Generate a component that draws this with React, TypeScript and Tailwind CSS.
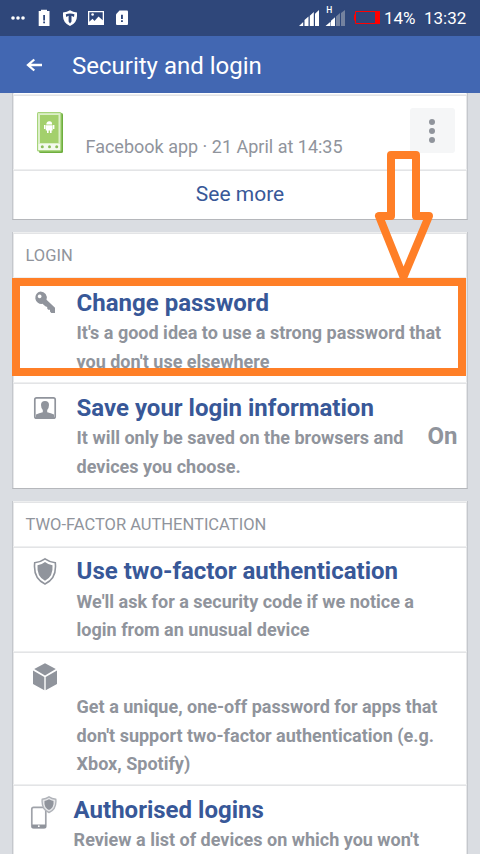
import type { ReactNode } from "react";

function Divider() {
  return (
    <div className="h-[2px] shrink-0 border-b border-[#e3e4e6] bg-[#eeeff0]" />
  );
}

function StatusBar() {
  return (
    <div className="flex h-[36px] shrink-0 items-center bg-[#2f477a] text-white">
      <svg width="240" height="36" viewBox="0 0 240 36" fill="#fff">
        <circle cx="13" cy="18" r="1.8" />
        <circle cx="18" cy="18" r="1.8" />
        <circle cx="23" cy="18" r="1.8" />
        <path d="M41 11V9.700h6V11h2.500v15H38.700V11z" />
        <path d="M43.200 15h1.800v5.500h-1.800zM43.200 21.500h1.800v1.800h-1.800z" fill="#2f477a" />
        <path d="M63 12.500Q67 12 70 10.300 73 12 77 12.500V16Q77 23 70 26 63 23 63 16z" />
        <path d="M65.800 14.300Q70 12.800 74.400 14.300L74 17 71.500 15.700V21.500L70 23.500 68.600 21.500V15.700L66.200 17z" fill="#2f477a" />
        <path d="M88 11h16v14H88z" />
        <path d="M89.300 12.300h13.400v8L98.500 16.500 94.500 21 92.500 18.800 89.300 21.800z" fill="#2f477a" />
        <circle cx="92.600" cy="14.500" r="1.300" />
        <path d="M119.500 10.500H127q1 0 1 1V24q0 1-1 1H117q-1 0-1-1V14.300z" />
        <path d="M121 14.800h1.900v4.200H121zM121 20.200h1.900v1.800H121z" fill="#2f477a" />
      </svg>
      <svg width="142" height="36" viewBox="240 0 142 36" fill="#fff">
        <path d="M299 26l4.200-4v4zM304.500 26v-6l4-3.500V26zM309.800 26V15.800l4-3.800v14zM315 26V13.800l4-3.800v16z" />
        <path d="M325.500 26l5-4.200V26zM331 26v-5.300l4-3.500V26z" />
        <path d="M336 26V16.500l4-3.500v13zM341 26V13l4-3v16z" fill="#74829f" />
        <text x="326.300" y="13" fontSize="8.500" fontWeight="500" className="font-['Roboto',sans-serif]">H</text>
        <path d="M355.500 11.500h20v12h-20z" fill="none" stroke="#f00" />
        <path d="M375 11h5v13h-5zM354 14.500h1.500v6H354z" fill="#f00" />
      </svg>
      <span className="ml-[2px] w-[40px] whitespace-nowrap text-[17px] leading-[36px]">14%</span>
      <span className="whitespace-nowrap text-[17px] leading-[36px]">13:32</span>
    </div>
  );
}

function Header() {
  return (
    <div className="flex h-[57px] shrink-0 items-center bg-[#4267b2] text-white">
      <svg className="ml-[25px]" width="19" height="16" viewBox="0 0 19 16" fill="none" stroke="#fff" strokeWidth="2.300">
        <path d="M17 8H3M9.300 2.500L3 8l6.300 5.500" />
      </svg>
      <h1 className="ml-[28px] mt-[3px] whitespace-nowrap text-[24px] leading-[32px]">Security and login</h1>
    </div>
  );
}

function DeviceIcon() {
  return (
    <svg width="28" height="42" viewBox="0 0 28 42">
      <rect x="2" y="1" width="24" height="40" rx="1.500" fill="#6faf3f" />
      <rect x="0" y="0" width="24.500" height="39.500" rx="1.500" fill="#a6d47a" />
      <rect x="1" y="1.200" width="22.300" height="37" fill="#dcefc8" />
      <rect x="3" y="3" width="18.500" height="28" fill="#a3d06c" />
      <path d="M9.300 12.500q0-3 2.900-3.300t2.900 3.300z" fill="#fff" />
      <path d="M8.800 13.200h6.800v5.300H8.800zM7 13h1.400v4H7zM16 13h1.400v4H16zM10 18.500h1.600v2.500H10zM13 18.500h1.600v2.500H13z" fill="#fff" />
      <rect x="1.500" y="32" width="21.500" height="6" fill="#f4faee" />
      <circle cx="5.300" cy="34.800" r="1.500" fill="#8bbd5a" />
      <circle cx="12.500" cy="34.800" r="1.500" fill="#8bbd5a" />
      <circle cx="19.700" cy="34.800" r="1.500" fill="#8bbd5a" />
    </svg>
  );
}

function KeyIcon() {
  return (
    <svg width="24" height="24" viewBox="0 0 24 24" fill="#90949c">
      <path fillRule="evenodd" d="M7.500 .5A6.300 6.300 0 0 1 13.500 8.800L22 16.800V22H18.300L17 20.500V18.700H15.200L14.200 17.500V16L12.300 15.300 9.500 12.800A6.200 6.200 0 1 1 7.500 .5zM6.600 3.400a1.900 1.900 0 1 0 .1 0z" />
    </svg>
  );
}

function PersonIcon() {
  return (
    <svg width="24" height="24" viewBox="0 0 24 24" fill="#90949c">
      <rect x="1.800" y="1.800" width="20.400" height="20.400" rx="1.800" fill="none" stroke="#90949c" strokeWidth="1.700" />
      <path d="M3 22v-3.500Q6 17.300 9.800 16.200V14Q8 12 8 9 8 5 12 5T16 9q0 3-1.800 5v2.200Q18 17.300 21 18.500V22z" />
    </svg>
  );
}

function ShieldIcon() {
  return (
    <svg width="24" height="30" viewBox="0 0 24 30" fill="#90949c">
      <path d="M12 1.800Q16.500 5 22.300 5.800 24 21.500 12 27 0 21.500 1.700 5.800 7.500 5 12 1.800z" fill="none" stroke="#90949c" strokeWidth="1.600" />
      <path d="M12 5Q15 7.500 19.500 8.300 20.500 19.500 12 23.800 3.500 19.500 4.500 8.300 9 7.500 12 5z" />
    </svg>
  );
}

function CubeIcon() {
  return (
    <svg width="24" height="28" viewBox="0 0 24 28" fill="#90949c">
      <path d="M12 .3L22.800 6.100 12 12.400 1.200 6.100zM0 7.500L11.300 14V27.300L0 20.900zM24 7.500L12.700 14V27.300L24 20.900z" />
    </svg>
  );
}

function PhoneShieldIcon() {
  return (
    <svg width="28" height="34" viewBox="0 0 28 34" fill="#90949c">
      <rect x="1.800" y="11.300" width="14" height="20.500" rx="1.800" fill="none" stroke="#a0a3aa" strokeWidth="1.700" />
      <path d="M2 28.500h14v3.500H2z" />
      <circle cx="8.800" cy="30.200" r=".9" fill="#fff" />
      <path d="M19 .8Q22 2.800 25.800 3.300 26.800 13.300 19 16.500 11.200 13.300 12.200 3.300 16 2.800 19 .8z" fill="#e6e7e9" stroke="#b0b3b9" strokeWidth="1.400" />
      <path d="M19 3.300Q21 4.600 23.500 5 24.300 11.500 19 14 13.700 11.500 14.500 5 17 4.600 19 3.300z" />
    </svg>
  );
}

function Card({ children, className }: { children: ReactNode; className: string }) {
  return (
    <section className={`mx-[12px] flex shrink-0 flex-col border-x border-[#c4c7cc] bg-white shadow-[inset_1px_0_#e6e7e9,inset_-1px_0_#e6e7e9] ${className}`}>
      {children}
    </section>
  );
}

function SectionHeading({ children }: { children: string }) {
  return (
    <h2 className="h-[43px] shrink-0 whitespace-nowrap pl-[12.500px] text-[16.500px] leading-[43px] text-[#90949c]">{children}</h2>
  );
}

function Title({ children }: { children: string }) {
  return <h3 className="h-[30px] whitespace-nowrap text-[24px] font-bold leading-[30px] text-[#385898]">{children}</h3>;
}

function Line({ children }: { children: string }) {
  return <p className="whitespace-nowrap text-[18px] font-bold leading-[28.500px] text-[#90949c]">{children}</p>;
}

export default function App() {
  return (
    <main className="relative flex h-[854px] w-[480px] flex-col overflow-hidden bg-[#dadde2] font-['Roboto',sans-serif]">
      <StatusBar />
      <Header />

      <Card className="h-[127px] border-b border-b-[#b5b7bb]">
        <div className="h-px shrink-0" />
        <Divider />
        <div className="flex h-[73px] shrink-0">
          <div className="ml-[24px] mt-[16px] w-[48.500px]"><DeviceIcon /></div>
          <p className="mt-[38px] w-[324px] whitespace-nowrap text-[18px] leading-[26px] text-[#90949c]">
            Facebook app · 21 April at 14:35
          </p>
          <button className="mt-[12px] flex h-[45px] w-[45px] flex-col items-center justify-center gap-[3px] rounded-[3px] bg-[#f5f6f7]">
            <span className="h-[6px] w-[6px] rounded-full bg-[#90949c]" />
            <span className="h-[6px] w-[6px] rounded-full bg-[#90949c]" />
            <span className="h-[6px] w-[6px] rounded-full bg-[#90949c]" />
          </button>
        </div>
        <Divider />
        <a className="h-[48px] text-center text-[21px] leading-[46px] text-[#385898]">See more</a>
      </Card>

      <Card className="mt-[12px] h-[257px] border-b border-b-[#b5b7bb]">
        <Divider />
        <SectionHeading>LOGIN</SectionHeading>
        <Divider />
        <div className="flex h-[103px] shrink-0">
          <div className="ml-[20px] mt-[12px] w-[43.600px]"><KeyIcon /></div>
          <div className="mt-[9px]">
            <Title>Change password</Title>
            <div className="mt-px">
              <Line>It's a good idea to use a strong password that</Line>
              <Line>you don't use elsewhere</Line>
            </div>
          </div>
        </div>
        <Divider />
        <div className="flex h-[104px] shrink-0">
          <div className="ml-[20px] mt-[12px] w-[43.600px]"><PersonIcon /></div>
          <div className="mt-[9px] w-[350.800px]">
            <Title>Save your login information</Title>
            <div className="mt-px">
              <Line>It will only be saved on the browsers and</Line>
              <Line>devices you choose.</Line>
            </div>
          </div>
          <span className="mt-[37px] text-[24px] font-bold leading-[30px] text-[#90949c]">On</span>
        </div>
      </Card>

      <Card className="mt-[12px] h-[360px]">
        <Divider />
        <SectionHeading>TWO-FACTOR AUTHENTICATION</SectionHeading>
        <Divider />
        <div className="flex h-[103px] shrink-0">
          <div className="ml-[20px] mt-[9px] w-[43.600px]"><ShieldIcon /></div>
          <div className="mt-[8px]">
            <Title>Use two-factor authentication</Title>
            <div className="mt-[1.500px]">
              <Line>We'll ask for a security code if we notice a</Line>
              <Line>login from an unusual device</Line>
            </div>
          </div>
        </div>
        <Divider />
        <div className="flex h-[131px] shrink-0">
          <div className="ml-[20px] mt-[10px] w-[43.600px]"><CubeIcon /></div>
          <div className="mt-[40px]">
            <Line>Get a unique, one-off password for apps that</Line>
            <Line>don't support two-factor authentication (e.g.</Line>
            <Line>Xbox, Spotify)</Line>
          </div>
        </div>
        <Divider />
        <div className="flex h-[100px] shrink-0">
          <div className="ml-[17px] mt-[10px] w-[43.600px]"><PhoneShieldIcon /></div>
          <div className="mt-[9px]">
            <Title>Authorised logins</Title>
            <div className="mt-px">
              <Line>Review a list of devices on which you won't</Line>
            </div>
          </div>
        </div>
      </Card>

      <div className="absolute left-[12px] top-[278px] h-[98px] w-[454px] border-8 border-[#ff7f27]" />
      <svg className="absolute left-[370px] top-[145px]" width="70" height="140" viewBox="370 145 70 140">
        <path d="M391 155H416V216H429L403.500 277 379 216H391z" fill="none" stroke="#ff7f27" strokeWidth="8" strokeLinejoin="round" />
      </svg>
    </main>
  );
}
